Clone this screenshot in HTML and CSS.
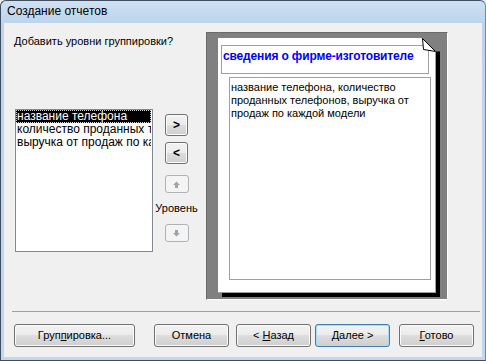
FILE: index.html
```html
<!DOCTYPE html>
<html lang="ru">
<head>
<meta charset="utf-8">
<title>Создание отчетов</title>
<link rel="stylesheet" href="styles.css">
</head>
<body>
<div class="window">
  <div class="titlebar">Создание отчетов</div>
  <div class="client">
    <div class="main">
      <div class="left">
        <div class="question">Добавить уровни группировки?</div>
        <div class="row">
          <div class="list">
            <div class="item selected">название телефона</div>
            <div class="item">количество проданных телефонов</div>
            <div class="item">выручка от продаж по каждой модели</div>
          </div>
          <div class="controls">
            <button class="sbtn first">&gt;</button>
            <button class="sbtn">&lt;</button>
            <button class="sbtn disabled up"><svg width="7" height="7" viewBox="0 0 7 7"><path d="M3.5 0.5 L7 4 H5 V7 H2 V4 H0 Z" fill="#a3a3a3"/></svg></button>
            <div class="level">Уровень</div>
            <button class="sbtn disabled"><svg width="7" height="7" viewBox="0 0 7 7"><path d="M3.5 6.5 L7 3 H5 V0 H2 V3 H0 Z" fill="#a3a3a3"/></svg></button>
          </div>
        </div>
      </div>
      <div class="preview">
        <div class="page">
          <div class="header">сведения о фирме-изготовителе</div>
          <div class="body">название телефона, количество проданных телефонов, выручка от продаж по каждой модели</div>
          <svg class="fold" width="20" height="18" viewBox="0 0 20 18"><path d="M1.5 0 H20 V13.5 H15.5 Z" fill="#808080"/><path d="M2.5 0.5 L3.5 11.5 L15.5 13.5 Z" fill="#fff" stroke="#000" stroke-width="1" stroke-linejoin="round"/></svg>
        </div>
      </div>
    </div>
    <div class="sep"></div>
    <div class="buttons">
      <button class="btn group">Груп<u>п</u>ировка...</button>
      <button class="btn cancel">Отмена</button>
      <button class="btn back">&lt; <u>Н</u>азад</button>
      <button class="btn next default"><u>Д</u>алее &gt;</button>
      <button class="btn done"><u>Г</u>отово</button>
    </div>
  </div>
</div>
</body>
</html>
```
FILE: styles.css
```css
html, body {
  margin: 0;
  padding: 0;
  background: #f0f0f0;
}
.window {
  width: 486px;
  height: 361px;
  box-sizing: border-box;
  border: 1px solid #3f4d5e;
  border-right-color: #2e9fd8;
  border-radius: 6px 6px 0 0;
  background: linear-gradient(to bottom, #cfe0f3 0px, #bdd4ec 22px, #c2d7ee 100%);
  padding: 0 3px 3px 3px;
  display: flex;
  flex-direction: column;
}
.titlebar {
  height: 22px;
  padding-left: 3px;
  font: 12px/21px "Liberation Sans", Arial, sans-serif;
  color: #000;
}
.client {
  flex: 1;
  background: #f0f0f0;
  display: flex;
  flex-direction: column;
  font: 11px/13px "Liberation Sans", Arial, sans-serif;
  color: #000;
}
.main {
  display: flex;
  height: 288px;
}
.left {
  width: 202px;
  padding-left: 10px;
  box-sizing: border-box;
}
.question {
  padding-top: 12px;
  height: 13px;
}
.row {
  display: flex;
  margin-top: 61px;
}
.list {
  margin-left: 1px;
  width: 138px;
  height: 143px;
  box-sizing: border-box;
  border: 1px solid #828790;
  background: #fff;
  overflow: hidden;
  padding-right: 1px;
}
.item {
  height: 13px;
  padding-left: 1px;
  white-space: nowrap;
  overflow: hidden;
  text-overflow: clip;
  font-size: 12px;
  line-height: 12px;
}
.item.selected {
  background: #000;
  color: #fff;
  outline: 1px dotted #d8d8d8;
  outline-offset: -1px;
}
.controls {
  margin-left: 12px;
  width: 23px;
  display: flex;
  flex-direction: column;
  align-items: center;
}
.sbtn {
  width: 23px;
  height: 22px;
  box-sizing: border-box;
  border: 1px solid #707070;
  border-radius: 3px;
  background: linear-gradient(to bottom, #f2f2f2 0%, #ebebeb 50%, #dddddd 50%, #cfcfcf 100%);
  box-shadow: inset 0 0 0 1px #fbfbfb;
  padding: 0;
  margin: 6px 0 0 0;
  font: bold 12px/18px "Liberation Sans", Arial, sans-serif;
  color: #000;
  display: flex;
  align-items: center;
  justify-content: center;
}
.sbtn.first {
  margin-top: 5px;
}
.sbtn.disabled {
  width: 24px;
  height: 18px;
  border-color: #adb2b5;
  background: #f4f4f4;
  box-shadow: none;
}
.sbtn.up {
  margin-top: 11px;
}
.level {
  margin-top: 9px;
  white-space: nowrap;
  height: 13px;
  line-height: 13px;
}
.level + .sbtn {
  margin-top: 9px;
}
.preview {
  margin-top: 9px;
  width: 242px;
  height: 268px;
  box-sizing: border-box;
  background: #808080;
  border-top: 1px solid #6a6a6a;
  border-left: 1px solid #6a6a6a;
  border-right: 1px solid #fff;
  border-bottom: 1px solid #fff;
  padding: 5px 0 0 11px;
}
.page {
  position: relative;
  width: 218px;
  height: 255px;
  box-sizing: border-box;
  background: #fff;
  border-right: 1px solid #a0a0a0;
  border-bottom: 1px solid #a0a0a0;
  box-shadow: 4px 4px 0 #000;
  padding: 7px 0 0 3px;
}
.header {
  width: 208px;
  height: 29px;
  box-sizing: border-box;
  border: 1px solid #a0a0a0;
  font-weight: bold;
  font-size: 12px;
  letter-spacing: -0.15px;
  color: #0000ff;
  padding: 4px 0 0 1px;
  white-space: nowrap;
}
.body {
  margin: 3px 0 0 8px;
  width: 202px;
  height: 203px;
  box-sizing: border-box;
  border: 1px solid #a0a0a0;
  padding: 3px 2px 0 1px;
  line-height: 13px;
}
.fold {
  position: absolute;
  top: 0;
  right: -5px;
}
.sep {
  margin: 0 2px 0 8px;
  height: 1px;
  background: #a0a0a0;
}
.buttons {
  display: flex;
  margin-top: 12px;
  padding-left: 10px;
}
.btn {
  height: 23px;
  width: 75px;
  box-sizing: border-box;
  border: 1px solid #707070;
  border-radius: 3px;
  background: linear-gradient(to bottom, #f2f2f2 0%, #ebebeb 50%, #dddddd 50%, #cfcfcf 100%);
  box-shadow: inset 0 0 0 1px #fbfbfb;
  font: 11px/13px "Liberation Sans", Arial, sans-serif;
  color: #000;
  padding: 0;
}
.btn u {
  text-underline-offset: 1px;
}
.btn.group {
  width: 121px;
}
.btn.cancel {
  margin-left: 19px;
}
.btn.back {
  margin-left: 7px;
}
.btn.next {
  margin-left: 4px;
}
.btn.done {
  margin-left: 9px;
}
.btn.default {
  border-color: #3c7fb1;
  box-shadow: inset 0 0 0 1px #a6dcf7;
}
```
